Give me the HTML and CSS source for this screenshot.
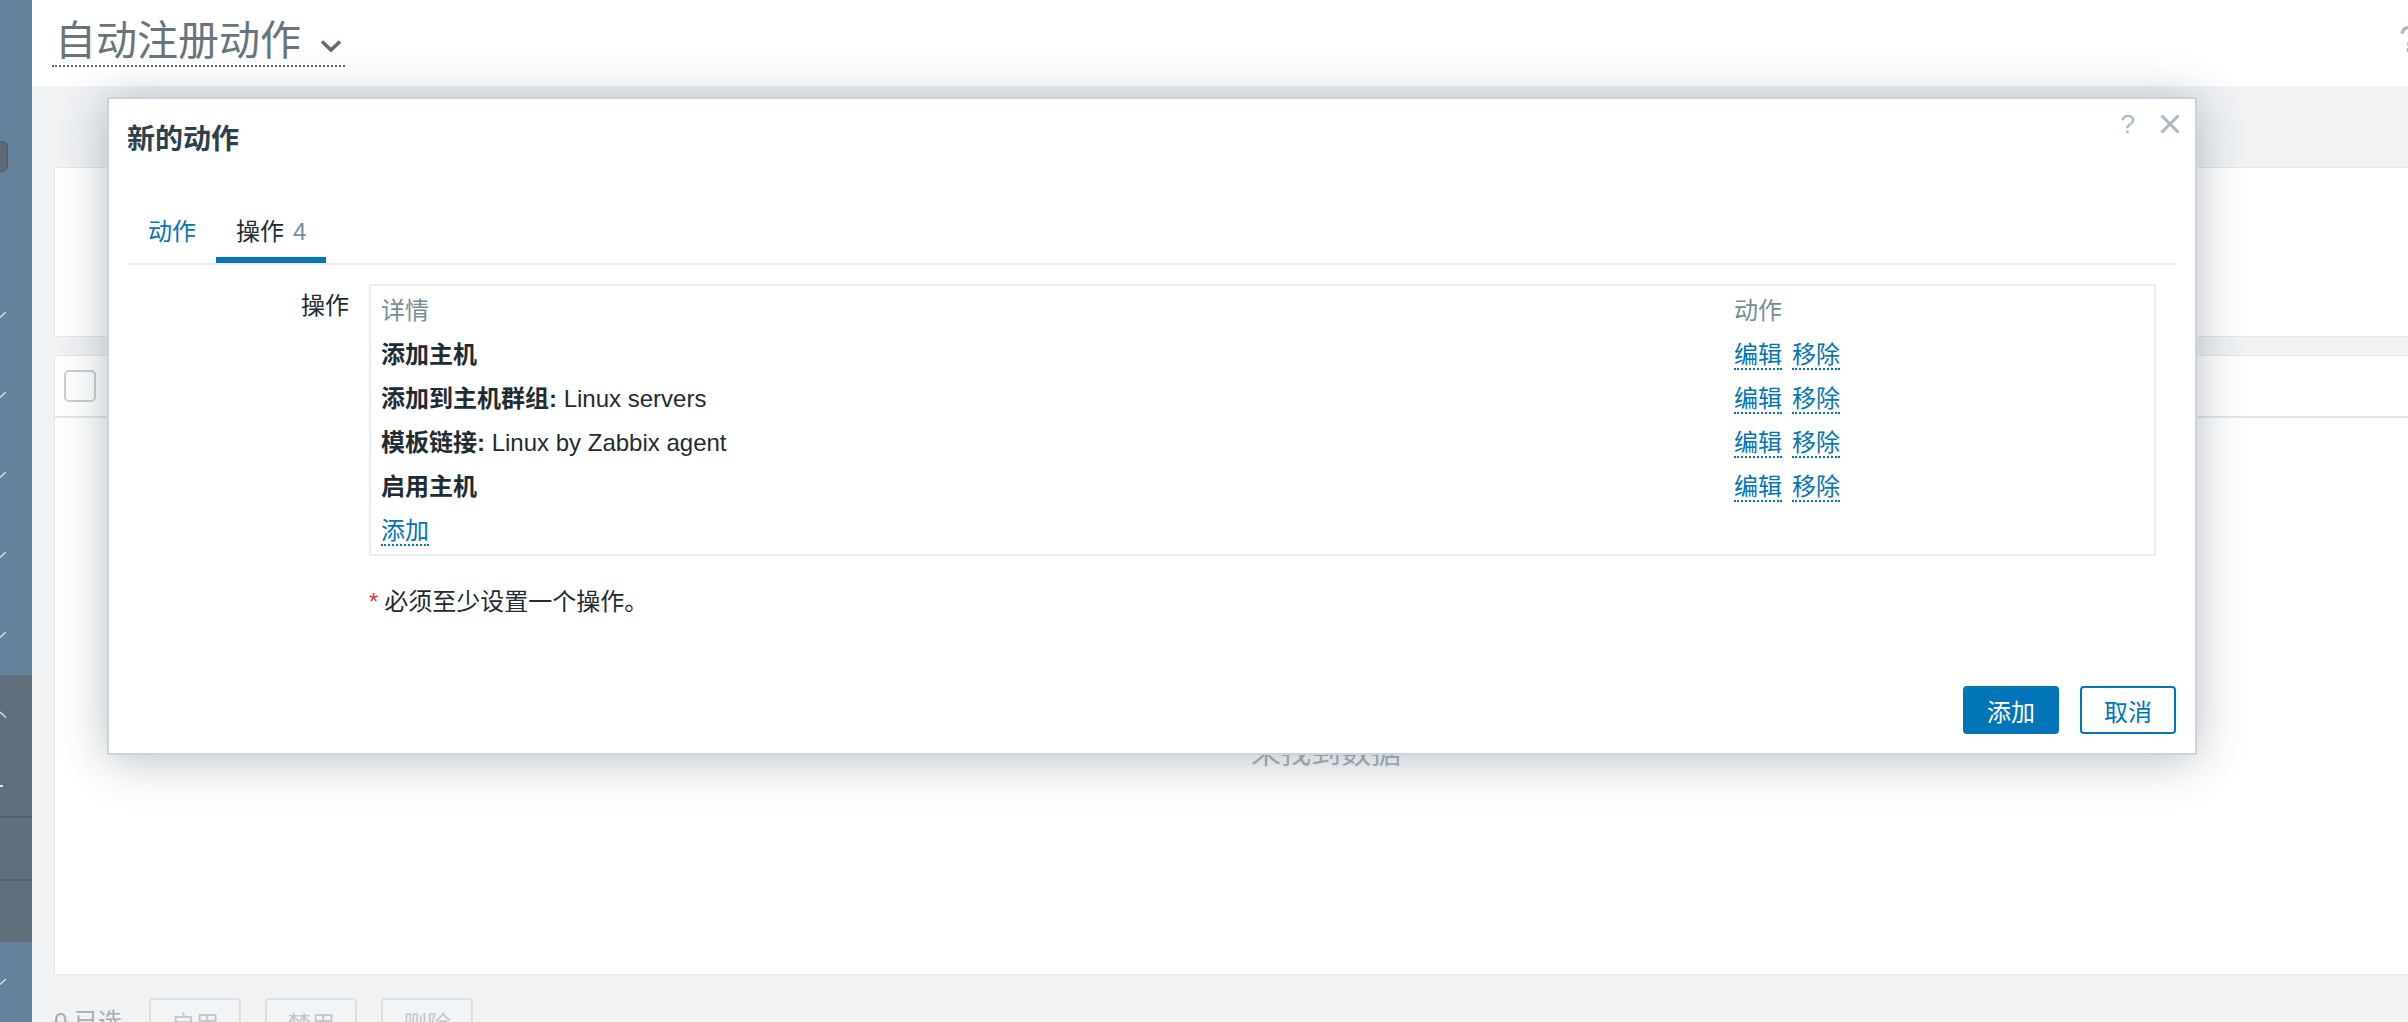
FILE: index.html
```html
<!DOCTYPE html>
<html lang="zh-CN">
<head>
<meta charset="utf-8">
<title>自动注册动作</title>
<link rel="stylesheet" href="styles.css">
</head>
<body>
<div class="app">
  <aside class="sidebar">
    <div class="sb-handle"></div>
    <ul class="sb-nav">
      <li class="sb-item"><svg class="sb-chev" width="8" height="8" viewBox="0 0 8 8"><polyline points="0,6.5 6,1"/></svg></li>
      <li class="sb-item"><svg class="sb-chev" width="8" height="8" viewBox="0 0 8 8"><polyline points="0,6.5 6,1"/></svg></li>
      <li class="sb-item"><svg class="sb-chev" width="8" height="8" viewBox="0 0 8 8"><polyline points="0,6.5 6,1"/></svg></li>
      <li class="sb-item"><svg class="sb-chev" width="8" height="8" viewBox="0 0 8 8"><polyline points="0,6.5 6,1"/></svg></li>
      <li class="sb-item"><svg class="sb-chev" width="8" height="8" viewBox="0 0 8 8"><polyline points="0,6.5 6,1"/></svg></li>
      <li class="sb-item dark"><svg class="sb-chev" width="8" height="8" viewBox="0 0 8 8"><polyline points="0,1 6,6.5"/></svg></li>
      <li class="sb-item dark short"><span class="sb-dot"></span></li>
      <li class="sb-item dark short sep"></li>
      <li class="sb-item dark short sep"></li>
      <li class="sb-item"><svg class="sb-chev" width="8" height="8" viewBox="0 0 8 8"><polyline points="0,6.5 6,1"/></svg></li>
    </ul>
  </aside>

  <main class="main">
    <header class="page-head">
      <button class="page-title" type="button">自动注册动作<svg class="title-chev" width="22" height="14" viewBox="0 0 22 14"><polyline points="2,2.5 11,11 20,2.5"/></svg></button>
      <span class="page-help">?</span>
    </header>
    <div class="page-body">
      <div class="page-inner">
        <section class="filter-panel"></section>
        <section class="list-panel">
          <div class="list-head"><span class="checkbox"></span></div>
          <div class="list-body"><div class="no-data">未找到数据</div></div>
        </section>
        <div class="list-foot">
          <span class="sel-count">0 已选</span>
          <button class="btn-muted" type="button" disabled>启用</button>
          <button class="btn-muted" type="button" disabled>禁用</button>
          <button class="btn-muted" type="button" disabled>删除</button>
        </div>
      </div>
    </div>
  </main>
</div>

<div class="dialog">
  <div class="dlg-head">
    <h4 class="dlg-title">新的动作</h4>
    <div class="dlg-ctrls">
      <span class="dlg-help">?</span>
      <svg class="dlg-close" width="20" height="20" viewBox="0 0 20 20"><line x1="1.5" y1="1.5" x2="18.5" y2="18.5"/><line x1="18.5" y1="1.5" x2="1.5" y2="18.5"/></svg>
    </div>
  </div>

  <ul class="tabs">
    <li class="tab"><a class="tab-link">动作</a></li>
    <li class="tab active"><a class="tab-link">操作<span class="tab-count">4</span></a></li>
  </ul>

  <div class="form">
    <div class="form-label">操作</div>
    <div class="ops">
      <div class="ops-row ops-head"><div>详情</div><div>动作</div></div>
      <div class="ops-row"><div><b>添加主机</b></div><div><a class="lnk">编辑</a><a class="lnk">移除</a></div></div>
      <div class="ops-row"><div><b>添加到主机群组:</b> Linux servers</div><div><a class="lnk">编辑</a><a class="lnk">移除</a></div></div>
      <div class="ops-row"><div><b>模板链接:</b> Linux by Zabbix agent</div><div><a class="lnk">编辑</a><a class="lnk">移除</a></div></div>
      <div class="ops-row"><div><b>启用主机</b></div><div><a class="lnk">编辑</a><a class="lnk">移除</a></div></div>
      <div class="ops-row"><div><a class="lnk">添加</a></div><div></div></div>
    </div>
    <div class="form-note"><span class="req">*</span>必须至少设置一个操作。</div>
  </div>

  <div class="dlg-foot">
    <button class="btn-primary" type="button">添加</button>
    <button class="btn-alt" type="button">取消</button>
  </div>
</div>
</body>
</html>
```
FILE: styles.css
```css
* {
  box-sizing: border-box;
  margin: 0;
  padding: 0;
}

html,
body {
  width: 2408px;
  height: 1022px;
  overflow: hidden;
}

body {
  position: relative;
  font-family: "Liberation Sans", "Noto Sans CJK SC", sans-serif;
  font-size: 24px;
  color: #1f2c33;
  background: #f0f2f4;
}

button {
  font-family: inherit;
}

.app {
  display: flex;
  height: 1022px;
}

/* ---------- sidebar ---------- */
.sidebar {
  width: 32px;
  flex: none;
  background: #64829b;
  display: flex;
  flex-direction: column;
  overflow: hidden;
}

.sb-handle {
  margin-top: 141px;
  width: 8px;
  height: 46px;
  background: #5b6a76;
  border: 1px solid #4d5a64;
  border-left: none;
  border-radius: 0 6px 6px 0;
}

.sb-nav {
  list-style: none;
  margin-top: 103px;
  display: flex;
  flex-direction: column;
}

.sb-item {
  height: 80px;
  display: flex;
  align-items: center;
}

.sb-item.dark {
  background: #5f6f7c;
}

.sb-item.short {
  height: 61px;
}

.sb-item.sep {
  height: 63px;
  border-top: 2px solid #52606b;
}

.sb-chev polyline {
  fill: none;
  stroke: #dbe3e9;
  stroke-width: 1.4;
}

.sb-dot {
  width: 3px;
  height: 2px;
  background: #e3e9ee;
}

/* ---------- main page ---------- */
.main {
  flex: 1;
  min-width: 0;
  display: flex;
  flex-direction: column;
  overflow: hidden;
  background: #f0f2f4;
}

.page-head {
  height: 86px;
  flex: none;
  background: #ffffff;
  display: flex;
  justify-content: space-between;
  align-items: flex-start;
}

.page-title {
  margin: 17px 0 0 20px;
  padding: 0 3px;
  display: inline-flex;
  align-items: center;
  font-size: 41px;
  line-height: 48px;
  color: #68747b;
  background: none;
  border: none;
  border-bottom: 2px dotted #5f6a70;
}

.title-chev {
  margin: 10px 0 0 19px;
}

.title-chev polyline {
  fill: none;
  stroke: #626e75;
  stroke-width: 3.6;
}

.page-help {
  margin: 16px -11px 0 0;
  font-size: 36px;
  line-height: 48px;
  color: #a9b4bb;
}

.page-body {
  flex: 1;
  padding-left: 22px;
}

.page-inner {
  width: 2544px;
}

.filter-panel {
  margin-top: 81px;
  height: 170px;
  background: #ffffff;
  border: 1px solid #e2e6e9;
}

.list-panel {
  margin-top: 18px;
  height: 620px;
  background: #ffffff;
  border: 1px solid #e2e6e9;
  display: flex;
  flex-direction: column;
}

.list-head {
  height: 62px;
  padding: 14px 0 0 9px;
  border-bottom: 2px solid #e2e6e9;
}

.checkbox {
  display: block;
  width: 32px;
  height: 32px;
  border: 2px solid #c6cfd5;
  border-radius: 5px;
  background: #ffffff;
}

.list-body {
  flex: 1;
  padding-top: 317px;
  text-align: center;
}

.no-data {
  font-size: 30px;
  line-height: 36px;
  color: #a9b6be;
}

.list-foot {
  margin-top: 23px;
  display: flex;
  align-items: center;
  gap: 24px;
}

.sel-count {
  margin-right: 3px;
  line-height: 48px;
  color: #a3aeb4;
}

.btn-muted {
  height: 48px;
  padding: 0 20px;
  font-size: 24px;
  color: #bfc8cd;
  background: #f2f4f5;
  border: 2px solid #dae0e3;
  border-radius: 4px;
}

/* ---------- dialog ---------- */
.dialog {
  position: absolute;
  left: 107px;
  top: 97px;
  z-index: 10;
  width: 2090px;
  height: 658px;
  background: #ffffff;
  border: 2px solid #ccd4d9;
  box-shadow: 0 4px 44px rgba(35, 55, 70, 0.32);
  display: flex;
  flex-direction: column;
}

.dlg-head {
  display: flex;
  justify-content: space-between;
  align-items: flex-start;
  padding: 0 15px 0 18px;
}

.dlg-title {
  margin-top: 23px;
  font-size: 28px;
  line-height: 36px;
  font-weight: bold;
  color: #2e404c;
}

.dlg-ctrls {
  margin-top: 14px;
  display: flex;
  align-items: center;
  gap: 25px;
}

.dlg-help {
  font-size: 26px;
  line-height: 22px;
  color: #abb8c0;
}

.dlg-close line {
  stroke: #abb8c0;
  stroke-width: 3;
}

.tabs {
  list-style: none;
  display: flex;
  margin: 44px 19px 0;
  border-bottom: 2px solid #ebeef0;
}

.tab {
  padding: 15px 20px 10px;
  line-height: 30px;
  border-bottom: 6px solid transparent;
}

.tab.active {
  border-bottom-color: #0275b8;
}

.tab-link {
  color: #0275b8;
}

.tab.active .tab-link {
  color: #1f2c33;
}

.tab-count {
  margin-left: 9px;
  color: #768d99;
}

.form {
  margin-top: 19px;
  display: grid;
  grid-template-columns: 240px 1787px;
  column-gap: 20px;
}

.form-label {
  padding-top: 7px;
  line-height: 30px;
  text-align: right;
}

.ops {
  border: 2px solid #ebeef0;
  padding: 3px 10px 1px;
}

.ops-row {
  display: grid;
  grid-template-columns: 1353px 1fr;
  height: 44px;
  align-items: center;
  line-height: 30px;
}

.ops-head {
  color: #768d99;
}

.ops b {
  font-weight: bold;
}

.lnk {
  color: #0275b8;
  border-bottom: 2px dotted #0275b8;
  cursor: pointer;
}

.lnk + .lnk {
  margin-left: 10px;
}

.form-note {
  grid-column: 2;
  margin-top: 31px;
  line-height: 30px;
}

.req {
  color: #e33734;
  margin-right: 6px;
}

.dlg-foot {
  margin-top: auto;
  display: flex;
  justify-content: flex-end;
  gap: 21px;
  padding: 0 19px 19px;
}

.btn-primary,
.btn-alt {
  height: 48px;
  padding: 0 22px;
  font-size: 24px;
  border: 2px solid #0275b8;
  border-radius: 4px;
}

.btn-primary {
  color: #ffffff;
  background: #0275b8;
}

.btn-alt {
  color: #0275b8;
  background: #ffffff;
}
```
